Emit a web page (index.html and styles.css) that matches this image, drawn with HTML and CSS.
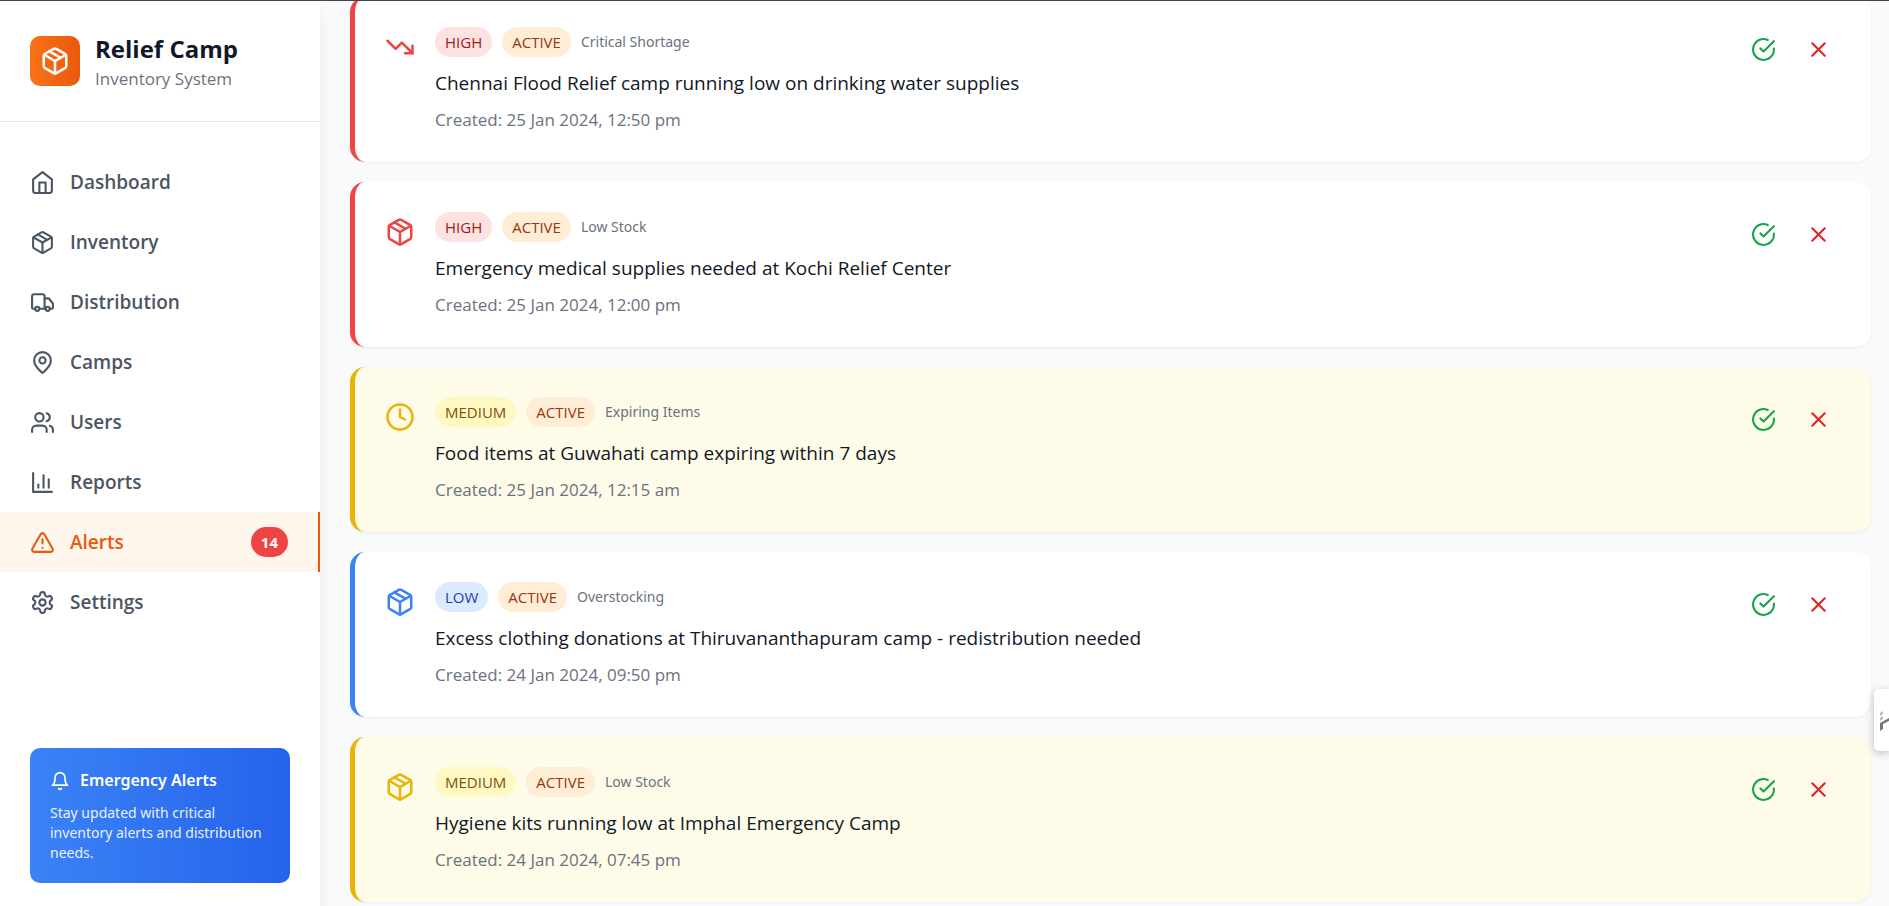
FILE: index.html
```html
<!DOCTYPE html>
<html lang="en">
<head>
<meta charset="utf-8">
<title>Relief Camp - Alerts</title>
<link rel="stylesheet" href="styles.css">
</head>
<body>
<svg class="sprite" aria-hidden="true">
  <symbol id="package" viewBox="0 0 24 24"><path d="m7.5 4.27 9 5.15"/><path d="M21 8a2 2 0 0 0-1-1.73l-7-4a2 2 0 0 0-2 0l-7 4A2 2 0 0 0 3 8v8a2 2 0 0 0 1 1.73l7 4a2 2 0 0 0 2 0l7-4A2 2 0 0 0 21 16Z"/><path d="m3.3 7 8.7 5 8.7-5"/><path d="M12 22V12"/></symbol>
  <symbol id="home" viewBox="0 0 24 24"><path d="m3 9 9-7 9 7v11a2 2 0 0 1-2 2H5a2 2 0 0 1-2-2z"/><polyline points="9 22 9 12 15 12 15 22"/></symbol>
  <symbol id="truck" viewBox="0 0 24 24"><path d="M14 18V6a2 2 0 0 0-2-2H4a2 2 0 0 0-2 2v11a1 1 0 0 0 1 1h2"/><path d="M15 18H9"/><path d="M19 18h2a1 1 0 0 0 1-1v-3.65a1 1 0 0 0-.22-.624l-3.48-4.35A1 1 0 0 0 17.52 8H14"/><circle cx="17" cy="18" r="2"/><circle cx="7" cy="18" r="2"/></symbol>
  <symbol id="pin" viewBox="0 0 24 24"><path d="M20 10c0 6-8 12-8 12s-8-6-8-12a8 8 0 0 1 16 0Z"/><circle cx="12" cy="10" r="3"/></symbol>
  <symbol id="users" viewBox="0 0 24 24"><path d="M16 21v-2a4 4 0 0 0-4-4H6a4 4 0 0 0-4 4v2"/><circle cx="9" cy="7" r="4"/><path d="M22 21v-2a4 4 0 0 0-3-3.87"/><path d="M16 3.13a4 4 0 0 1 0 7.75"/></symbol>
  <symbol id="chart" viewBox="0 0 24 24"><path d="M3 3v18h18"/><path d="M18 17V9"/><path d="M13 17V5"/><path d="M8 17v-3"/></symbol>
  <symbol id="warning" viewBox="0 0 24 24"><path d="m21.73 18-8-14a2 2 0 0 0-3.48 0l-8 14A2 2 0 0 0 4 21h16a2 2 0 0 0 1.73-3Z"/><path d="M12 9v4"/><path d="M12 17h.01"/></symbol>
  <symbol id="gear" viewBox="0 0 24 24"><path d="M12.22 2h-.44a2 2 0 0 0-2 2v.18a2 2 0 0 1-1 1.73l-.43.25a2 2 0 0 1-2 0l-.15-.08a2 2 0 0 0-2.73.73l-.22.38a2 2 0 0 0 .73 2.73l.15.1a2 2 0 0 1 1 1.72v.51a2 2 0 0 1-1 1.74l-.15.09a2 2 0 0 0-.73 2.73l.22.38a2 2 0 0 0 2.73.73l.15-.08a2 2 0 0 1 2 0l.43.25a2 2 0 0 1 1 1.73V20a2 2 0 0 0 2 2h.44a2 2 0 0 0 2-2v-.18a2 2 0 0 1 1-1.73l.43-.25a2 2 0 0 1 2 0l.15.08a2 2 0 0 0 2.73-.73l.22-.39a2 2 0 0 0-.73-2.73l-.15-.08a2 2 0 0 1-1-1.74v-.5a2 2 0 0 1 1-1.74l.15-.09a2 2 0 0 0 .73-2.73l-.22-.38a2 2 0 0 0-2.73-.73l-.15.08a2 2 0 0 1-2 0l-.43-.25a2 2 0 0 1-1-1.73V4a2 2 0 0 0-2-2z"/><circle cx="12" cy="12" r="3"/></symbol>
  <symbol id="bell" viewBox="0 0 24 24"><path d="M6 8a6 6 0 0 1 12 0c0 7 3 9 3 9H3s3-2 3-9"/><path d="M10.3 21a1.94 1.94 0 0 0 3.4 0"/></symbol>
  <symbol id="trend-down" viewBox="0 0 24 24"><polyline points="22 17 13.5 8.5 8.5 13.5 2 7"/><polyline points="16 17 22 17 22 11"/></symbol>
  <symbol id="clock" viewBox="0 0 24 24"><circle cx="12" cy="12" r="10"/><polyline points="12 6 12 12 16 14"/></symbol>
  <symbol id="check" viewBox="0 0 24 24"><path d="M22 11.08V12a10 10 0 1 1-5.93-9.14"/><path d="m9 11 3 3L22 4"/></symbol>
  <symbol id="close" viewBox="0 0 24 24"><path d="M18 6 6 18"/><path d="m6 6 12 12"/></symbol>
</svg>
<div class="app">
  <aside class="sidebar">
    <header class="brand">
      <span class="brand-logo"><svg class="icon icon-lg"><use href="#package"/></svg></span>
      <div>
        <h1 class="brand-name">Relief Camp</h1>
        <p class="brand-sub">Inventory System</p>
      </div>
    </header>
    <nav class="nav">
      <a class="nav-item" href="#dashboard"><svg class="icon"><use href="#home"/></svg>Dashboard</a>
      <a class="nav-item" href="#inventory"><svg class="icon"><use href="#package"/></svg>Inventory</a>
      <a class="nav-item" href="#distribution"><svg class="icon"><use href="#truck"/></svg>Distribution</a>
      <a class="nav-item" href="#camps"><svg class="icon"><use href="#pin"/></svg>Camps</a>
      <a class="nav-item" href="#users-page"><svg class="icon"><use href="#users"/></svg>Users</a>
      <a class="nav-item" href="#reports"><svg class="icon"><use href="#chart"/></svg>Reports</a>
      <a class="nav-item active" href="#alerts" aria-current="page"><svg class="icon"><use href="#warning"/></svg>Alerts<span class="count">14</span></a>
      <a class="nav-item" href="#settings"><svg class="icon"><use href="#gear"/></svg>Settings</a>
    </nav>
    <section class="notice">
      <h2 class="notice-title"><svg class="icon icon-sm"><use href="#bell"/></svg>Emergency Alerts</h2>
      <p class="notice-text">Stay updated with critical inventory alerts and distribution needs.</p>
    </section>
  </aside>
  <main class="alerts">
    <article class="card red">
      <svg class="icon icon-lg card-icon"><use href="#trend-down"/></svg>
      <div class="card-body">
        <div class="tags"><span class="pill priority">HIGH</span><span class="pill status">ACTIVE</span><span class="kind">Critical Shortage</span></div>
        <h3 class="message">Chennai Flood Relief camp running low on drinking water supplies</h3>
        <p class="created">Created: 25 Jan 2024, 12:50 pm</p>
      </div>
      <div class="actions">
        <button class="action resolve" aria-label="Resolve"><svg class="icon"><use href="#check"/></svg></button>
        <button class="action dismiss" aria-label="Dismiss"><svg class="icon"><use href="#close"/></svg></button>
      </div>
    </article>
    <article class="card red">
      <svg class="icon icon-lg card-icon"><use href="#package"/></svg>
      <div class="card-body">
        <div class="tags"><span class="pill priority">HIGH</span><span class="pill status">ACTIVE</span><span class="kind">Low Stock</span></div>
        <h3 class="message">Emergency medical supplies needed at Kochi Relief Center</h3>
        <p class="created">Created: 25 Jan 2024, 12:00 pm</p>
      </div>
      <div class="actions">
        <button class="action resolve" aria-label="Resolve"><svg class="icon"><use href="#check"/></svg></button>
        <button class="action dismiss" aria-label="Dismiss"><svg class="icon"><use href="#close"/></svg></button>
      </div>
    </article>
    <article class="card yellow">
      <svg class="icon icon-lg card-icon"><use href="#clock"/></svg>
      <div class="card-body">
        <div class="tags"><span class="pill priority">MEDIUM</span><span class="pill status">ACTIVE</span><span class="kind">Expiring Items</span></div>
        <h3 class="message">Food items at Guwahati camp expiring within 7 days</h3>
        <p class="created">Created: 25 Jan 2024, 12:15 am</p>
      </div>
      <div class="actions">
        <button class="action resolve" aria-label="Resolve"><svg class="icon"><use href="#check"/></svg></button>
        <button class="action dismiss" aria-label="Dismiss"><svg class="icon"><use href="#close"/></svg></button>
      </div>
    </article>
    <article class="card blue">
      <svg class="icon icon-lg card-icon"><use href="#package"/></svg>
      <div class="card-body">
        <div class="tags"><span class="pill priority">LOW</span><span class="pill status">ACTIVE</span><span class="kind">Overstocking</span></div>
        <h3 class="message">Excess clothing donations at Thiruvananthapuram camp - redistribution needed</h3>
        <p class="created">Created: 24 Jan 2024, 09:50 pm</p>
      </div>
      <div class="actions">
        <button class="action resolve" aria-label="Resolve"><svg class="icon"><use href="#check"/></svg></button>
        <button class="action dismiss" aria-label="Dismiss"><svg class="icon"><use href="#close"/></svg></button>
      </div>
    </article>
    <article class="card yellow">
      <svg class="icon icon-lg card-icon"><use href="#package"/></svg>
      <div class="card-body">
        <div class="tags"><span class="pill priority">MEDIUM</span><span class="pill status">ACTIVE</span><span class="kind">Low Stock</span></div>
        <h3 class="message">Hygiene kits running low at Imphal Emergency Camp</h3>
        <p class="created">Created: 24 Jan 2024, 07:45 pm</p>
      </div>
      <div class="actions">
        <button class="action resolve" aria-label="Resolve"><svg class="icon"><use href="#check"/></svg></button>
        <button class="action dismiss" aria-label="Dismiss"><svg class="icon"><use href="#close"/></svg></button>
      </div>
    </article>
  </main>
</div>
<button class="side-tab" aria-label="Open side panel">
  <svg class="side-tab-icon" viewBox="0 0 9 22"><path d="M0 3l3-2v3l-3 2zM0 8l3-2v3l-3 2z" fill="#b8b8b8"/><path d="M0 13l9-5v3l-6 3v5l-3 2z" fill="#777"/></svg>
</button>
</body>
</html>
```

FILE: styles.css
```css
* {
  box-sizing: border-box;
}

body,
h1,
h2,
h3,
p {
  margin: 0;
}

body {
  background: #f9fafb;
  color: #111827;
  font-family: "Open Sans", "Noto Sans", sans-serif;
  font-size: 19px;
  overflow: hidden;
}

/* Hairline under the browser chrome, above scrolled content */
body::before {
  content: "";
  position: fixed;
  z-index: 10;
  top: 0;
  left: 0;
  right: 0;
  height: 1px;
  background: #434347;
}

.sprite {
  display: none;
}

.app {
  display: flex;
  height: 100vh;
  padding-top: 1px;
}

.icon {
  width: 25px;
  height: 25px;
  flex: none;
  fill: none;
  stroke: currentColor;
  stroke-width: 2;
  stroke-linecap: round;
  stroke-linejoin: round;
}

.icon-lg {
  width: 30px;
  height: 30px;
}

.icon-sm {
  width: 20px;
  height: 20px;
}

.sidebar {
  display: flex;
  flex-direction: column;
  flex: none;
  width: 320px;
  background: #fff;
  box-shadow: 0 12px 19px -4px rgba(0, 0, 0, 0.1), 0 5px 8px -5px rgba(0, 0, 0, 0.1);
}

.brand {
  display: flex;
  align-items: center;
  gap: 15px;
  padding: 30px;
  border-bottom: 1px solid #e5e7eb;
}

.brand-logo {
  display: grid;
  place-items: center;
  width: 50px;
  height: 50px;
  border-radius: 10px;
  background: linear-gradient(to right, #f97316, #ea580c);
  color: #fff;
}

.brand-name {
  font-size: 24px;
  font-weight: 700;
  line-height: 35px;
}

.brand-sub {
  color: #6b7280;
  font-size: 17px;
  line-height: 25px;
}

.nav {
  flex: 1;
  padding-top: 30px;
}

.nav-item {
  display: flex;
  align-items: center;
  gap: 15px;
  height: 60px;
  padding: 0 30px;
  color: #4b5563;
  font-size: 19px;
  font-weight: 600;
  text-decoration: none;
}

.nav-item.active {
  border-right: 2px solid #ea580c;
  background: #fff7ed;
  color: #ea580c;
}

.count {
  margin-left: auto;
  padding: 0 10px;
  border-radius: 15px;
  background: #ef4444;
  color: #fff;
  font-size: 15px;
  font-weight: 700;
  line-height: 30px;
}

.notice {
  margin: 0 30px 23px;
  padding: 20px;
  border-radius: 10px;
  background: linear-gradient(to right, #3b82f6, #2563eb);
  color: #fff;
  font-family: "Noto Sans", "Open Sans", sans-serif;
}

.notice-title {
  display: flex;
  align-items: center;
  gap: 10px;
  margin-bottom: 10px;
  font-size: 16px;
  font-weight: 600;
  line-height: 25px;
}

.notice-text {
  font-size: 14px;
  line-height: 20px;
  opacity: 0.9;
}

.alerts {
  display: flex;
  flex: 1;
  flex-direction: column;
  gap: 20px;
  min-width: 0;
  margin-top: -4px;
  padding: 0 18px 0 30px;
}

.card {
  display: flex;
  align-items: flex-start;
  gap: 20px;
  flex: none;
  padding: 30px;
  border-left: 5px solid var(--accent);
  border-radius: 15px;
  background: var(--fill, #fff);
  box-shadow: 0 1px 3px rgba(0, 0, 0, 0.06);
}

.red {
  --accent: #ef4444;
  --tag: #fee2e2;
  --tag-text: #991b1b;
}

.yellow {
  --accent: #eab308;
  --fill: #fefce8;
  --tag: #fef9c3;
  --tag-text: #854d0e;
}

.blue {
  --accent: #3b82f6;
  --tag: #dbeafe;
  --tag-text: #1e40af;
}

.card-icon {
  margin-top: 5px;
  color: var(--accent);
}

.card-body {
  flex: 1;
  min-width: 0;
}

.tags {
  display: flex;
  align-items: center;
  gap: 10px;
  margin-bottom: 10px;
  font-size: 15px;
  line-height: 30px;
}

.pill {
  padding: 0 10px;
  border-radius: 15px;
  font-weight: 500;
}

.priority {
  background: var(--tag);
  color: var(--tag-text);
}

.status {
  background: #ffedd5;
  color: #9a3412;
}

.kind {
  color: #6b7280;
  font-family: "Noto Sans", "Open Sans", sans-serif;
  font-size: 14px;
}

.message {
  margin-bottom: 8px;
  font-size: 19px;
  font-weight: 400;
  line-height: 32px;
}

.created {
  color: #6b7280;
  font-size: 17px;
  line-height: 25px;
}

.actions {
  display: flex;
  gap: 10px;
}

.action {
  display: grid;
  place-items: center;
  padding: 10px;
  border: 0;
  background: none;
}

.resolve {
  color: #16a34a;
}

.dismiss {
  color: #dc2626;
}

.side-tab {
  position: fixed;
  top: 689px;
  right: 0;
  width: 15px;
  height: 62px;
  padding: 2px 0 0 6px;
  border: 0;
  border-radius: 5px 0 0 5px;
  background: #fff;
  box-shadow: 0 2px 8px rgba(0, 0, 0, 0.25);
}

.side-tab-icon {
  display: block;
  width: 9px;
  height: 22px;
}
```
